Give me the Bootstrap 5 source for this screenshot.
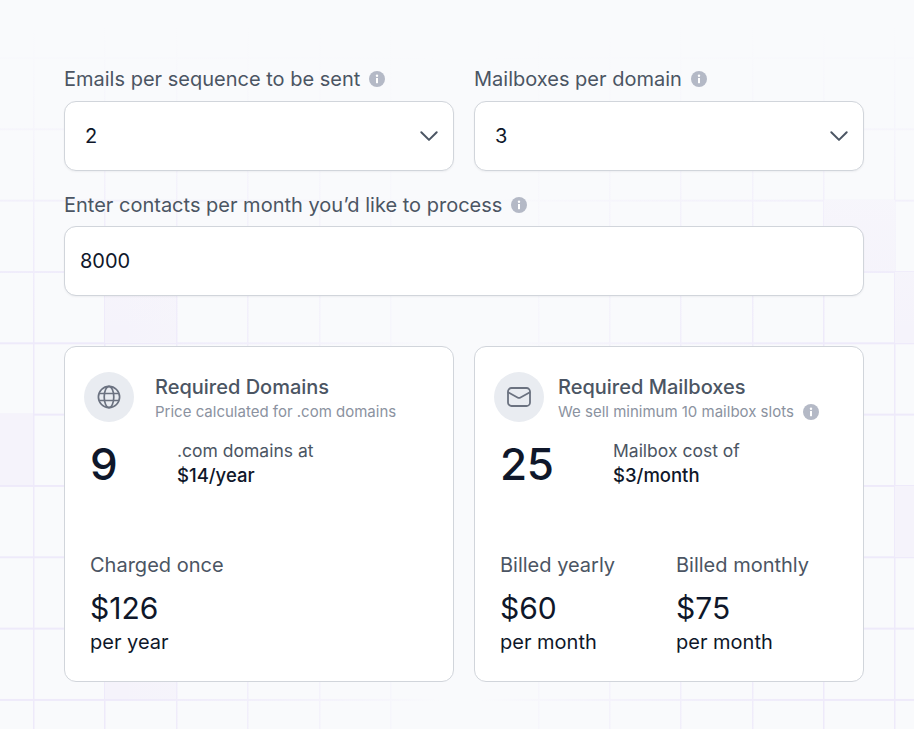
<!DOCTYPE html>
<html lang="en">
<head>
<meta charset="utf-8">
<title>Calculator</title>
<link href="https://cdn.jsdelivr.net/npm/bootstrap@5.3.0/dist/css/bootstrap.min.css" rel="stylesheet">
<style>
html,body{height:100%}
body{
  --ln:#eeeafa;--cell:#f5f3fb;--bg:249,250,252;
  font-family:Inter,"Liberation Sans",sans-serif;color:#0f172a;overflow:hidden;
  background-color:rgb(var(--bg));
  background-image:
    linear-gradient(to bottom,rgba(var(--bg),1) 25px,rgba(var(--bg),.7) 130px,rgba(var(--bg),.25) 230px,rgba(var(--bg),0) 345px),
    linear-gradient(to right,rgba(var(--bg),0) 110px,rgba(var(--bg),.3) 250px,rgba(var(--bg),.75) 390px,rgba(var(--bg),1) 440px,rgba(var(--bg),1) 480px,rgba(var(--bg),.75) 540px,rgba(var(--bg),.3) 680px,rgba(var(--bg),0) 820px),
    linear-gradient(var(--cell),var(--cell)),linear-gradient(var(--cell),var(--cell)),linear-gradient(var(--cell),var(--cell)),
    linear-gradient(var(--cell),var(--cell)),linear-gradient(var(--cell),var(--cell)),linear-gradient(var(--cell),var(--cell)),
    linear-gradient(var(--ln),var(--ln)),linear-gradient(var(--ln),var(--ln)),linear-gradient(var(--ln),var(--ln)),
    linear-gradient(var(--ln),var(--ln)),linear-gradient(var(--ln),var(--ln)),linear-gradient(var(--ln),var(--ln)),
    linear-gradient(var(--ln),var(--ln)),linear-gradient(var(--ln),var(--ln)),linear-gradient(var(--ln),var(--ln)),
    linear-gradient(var(--ln),var(--ln)),linear-gradient(var(--ln),var(--ln)),linear-gradient(var(--ln),var(--ln)),
    linear-gradient(to bottom,var(--ln) 1.5px,transparent 1.5px);
  background-size:100% 100%,100% 100%,
    33px 71px,71px 71px,71px 71px,71px 71px,20px 71px,20px 71px,
    1.5px 100%,1.5px 100%,1.5px 100%,1.5px 100%,1.5px 100%,1.5px 100%,
    1.5px 100%,1.5px 100%,1.5px 100%,1.5px 100%,1.5px 100%,1.5px 100%,
    100% 71.33px;
  background-position:0 0,0 0,
    0 414px,105px 272px,105px 628px,824px 200px,895px 272px,895px 486px,
    33px 0,104.3px 0,176px 0,247.3px 0,318.7px 0,390px 0,
    538px 0,609px 0,680px 0,751.5px 0,823px 0,894px 0,
    0 57px;
  background-repeat:no-repeat,no-repeat,
    no-repeat,no-repeat,no-repeat,no-repeat,no-repeat,no-repeat,
    no-repeat,no-repeat,no-repeat,no-repeat,no-repeat,no-repeat,
    no-repeat,no-repeat,no-repeat,no-repeat,no-repeat,no-repeat,
    repeat;
}
.calc{padding:68px 50px 0 64px}
.field-label{font-size:20px;line-height:22px;color:#4b5563;margin-bottom:11px;display:flex;align-items:center;gap:9px}
.contacts{margin-top:23px}
.contacts .field-label{margin-bottom:10px}
.info{width:16px;height:16px;flex:none;display:block}
.field{height:70px;background-color:#fff;border:1px solid #d1d5db;border-radius:12px;font-size:20px;color:#0f172a;box-shadow:0 1px 2px rgba(15,23,42,.05)}
.form-select.field{padding:0 20px;font-size:20px;color:#0f172a;background-position:right 14px center;background-size:20px 20px;
 background-image:url("data:image/svg+xml,%3csvg xmlns='http://www.w3.org/2000/svg' viewBox='0 0 20 20'%3e%3cpath fill='none' stroke='%234b5563' stroke-width='2' stroke-linecap='round' stroke-linejoin='round' d='M2.3 6.2l7.7 7.7 7.7-7.7'/%3e%3c/svg%3e")}
.form-control.field{padding:0 15px}
.grid-row{display:grid;grid-template-columns:390px 390px;column-gap:20px}
.cards{margin-top:50px}
.stat{background:#fff;border:1px solid #d1d5db;border-radius:12px;height:336px;padding:25px 19px 0 19px;display:flex;flex-direction:column}
.ic{width:50px;height:50px;border-radius:50%;background:#e9ecf1;display:flex;align-items:center;justify-content:center;flex:none}
.head{padding-top:3px}
.head-a{margin-left:21px}
.head-b{margin-left:14px}
.t{font-size:20px;font-weight:500;line-height:24px;color:#4b5563}
.s{font-size:15px;line-height:20px;margin-top:3px;color:#8b92a0;display:flex;align-items:center;gap:9px}
.figure{margin-top:16px}
.big{font-size:44px;font-weight:450;line-height:52px;color:#0f172a;margin-left:6px;letter-spacing:-.3px}
.big-a{width:87px}
.big-b{width:113px}
.u{font-size:17.5px;line-height:25px;color:#4b5563}
.u b{font-weight:500;font-size:18.5px;color:#0f172a;display:block}
.bill{margin-top:63px;margin-left:6px}
.bill>div{width:176px;flex:none}
.cap{font-size:20px;line-height:24px;color:#4b5563}
.amt{font-size:30px;line-height:38px;color:#0f172a;margin-top:12px}
.per{font-size:20px;line-height:24px;color:#0f172a;margin-top:3px}
</style>
</head>
<body>
<main class="calc">
  <div class="grid-row">
    <div>
      <label class="field-label">Emails per sequence to be sent
        <svg class="info" viewBox="0 0 16 16"><circle cx="8" cy="8" r="8" fill="#b4b9c6"/><rect x="7" y="7" width="2" height="5.2" fill="#fff"/><circle cx="8" cy="4.7" r="1.2" fill="#fff"/></svg>
      </label>
      <select class="form-select field"><option>2</option></select>
    </div>
    <div>
      <label class="field-label">Mailboxes per domain
        <svg class="info" viewBox="0 0 16 16"><circle cx="8" cy="8" r="8" fill="#b4b9c6"/><rect x="7" y="7" width="2" height="5.2" fill="#fff"/><circle cx="8" cy="4.7" r="1.2" fill="#fff"/></svg>
      </label>
      <select class="form-select field"><option>3</option></select>
    </div>
  </div>
  <div class="contacts">
    <label class="field-label">Enter contacts per month you’d like to process
      <svg class="info" viewBox="0 0 16 16"><circle cx="8" cy="8" r="8" fill="#b4b9c6"/><rect x="7" y="7" width="2" height="5.2" fill="#fff"/><circle cx="8" cy="4.7" r="1.2" fill="#fff"/></svg>
    </label>
    <input class="form-control field" value="8000">
  </div>
  <div class="grid-row cards">
    <section class="stat">
      <div class="d-flex"><div class="ic">
        <svg width="24" height="24" viewBox="0 0 24 24" fill="none" stroke="#6b7280" stroke-width="1.7"><circle cx="12" cy="12" r="10.6"/><ellipse cx="12" cy="12" rx="4.8" ry="10.6"/><path d="M2.2 8.5h19.6M2.2 15.5h19.6"/></svg>
      </div><div class="head head-a"><div class="t">Required Domains</div><div class="s">Price calculated for .com domains</div></div></div>
      <div class="d-flex figure"><div class="big big-a">9</div><div class="u">.com domains at<b>$14/year</b></div></div>
      <div class="d-flex bill">
        <div><div class="cap">Charged once</div><div class="amt">$126</div><div class="per">per year</div></div>
      </div>
    </section>
    <section class="stat">
      <div class="d-flex"><div class="ic">
        <svg width="24" height="24" viewBox="0 0 24 24" fill="none" stroke="#6b7280" stroke-width="1.8"><rect x="1" y="3" width="22" height="18" rx="3.5"/><path d="M1.5 7.5l9 5q1.5 .8 3 0l9-5" stroke-linecap="round"/></svg>
      </div><div class="head head-b"><div class="t">Required Mailboxes</div><div class="s">We sell minimum 10 mailbox slots
        <svg class="info" viewBox="0 0 16 16"><circle cx="8" cy="8" r="8" fill="#b4b9c6"/><rect x="7" y="7" width="2" height="5.2" fill="#fff"/><circle cx="8" cy="4.7" r="1.2" fill="#fff"/></svg>
      </div></div></div>
      <div class="d-flex figure"><div class="big big-b">25</div><div class="u">Mailbox cost of<b>$3/month</b></div></div>
      <div class="d-flex bill">
        <div><div class="cap">Billed yearly</div><div class="amt">$60</div><div class="per">per month</div></div>
        <div><div class="cap">Billed monthly</div><div class="amt">$75</div><div class="per">per month</div></div>
      </div>
    </section>
  </div>
</main>
</body>
</html>
